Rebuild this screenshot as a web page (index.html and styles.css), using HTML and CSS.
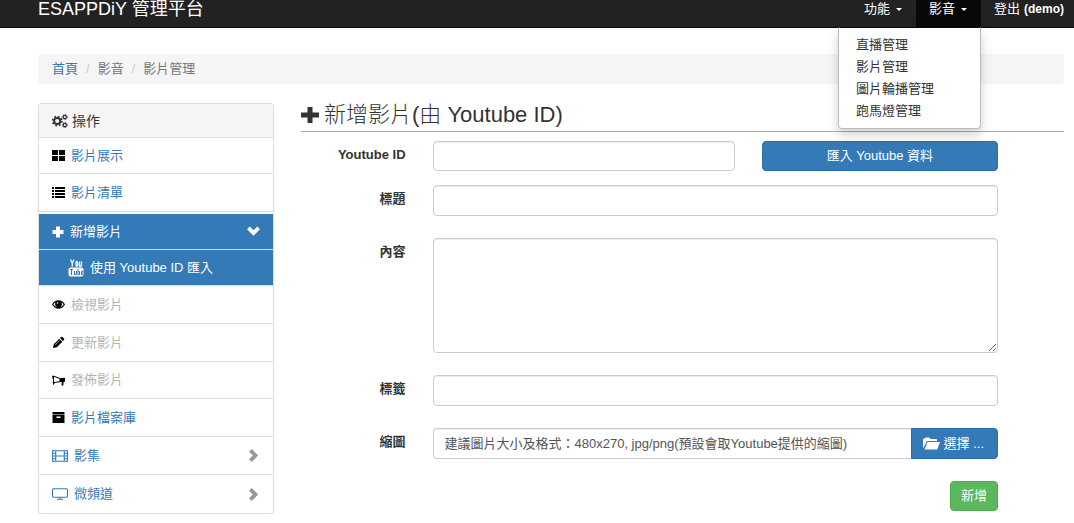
FILE: index.html
```html
<!DOCTYPE html>
<html lang="zh-Hant">
<head>
<meta charset="utf-8">
<meta name="viewport" content="width=device-width, initial-scale=1">
<title>ESAPPDiY 管理平台</title>
<link rel="stylesheet" href="styles.css">
</head>
<body>
<header class="navbar">
  <div class="container navbar-inner">
    <a class="brand" href="#">ESAPPDiY 管理平台</a>
    <ul class="nav">
      <li class="nav-item"><a class="nav-link" href="#">功能<span class="caret"></span></a></li>
      <li class="nav-item">
        <a class="nav-link active" href="#" aria-expanded="true">影音<span class="caret"></span></a>
        <ul class="menu">
          <li><a href="#">直播管理</a></li>
          <li><a href="#">影片管理</a></li>
          <li><a href="#">圖片輪播管理</a></li>
          <li><a href="#">跑馬燈管理</a></li>
        </ul>
      </li>
      <li class="nav-item"><a class="nav-link last" href="#">登出 <span class="strong">(demo)</span></a></li>
    </ul>
  </div>
</header>
<div class="container">
  <ol class="breadcrumb">
    <li><a href="#">首頁</a></li>
    <li>影音</li>
    <li>影片管理</li>
  </ol>
  <div class="layout">
    <nav class="panel" aria-label="操作">
      <h2 class="panel-heading">
        <svg class="icon wide" viewBox="0 0 16 14"><g fill="none" stroke="currentColor"><circle cx="5.2" cy="7" r="3.1" stroke-width="2"/><circle cx="5.2" cy="7" r="4.6" stroke-width="1.6" stroke-dasharray="1.8 1.81"/><circle cx="12.8" cy="3" r="1.6" stroke-width="1.2"/><circle cx="12.8" cy="3" r="2.5" stroke-width="1" stroke-dasharray="1 .963"/><circle cx="12.8" cy="11" r="1.6" stroke-width="1.2"/><circle cx="12.8" cy="11" r="2.5" stroke-width="1" stroke-dasharray="1 .963"/></g></svg>
        操作</h2>
      <ul class="list">
        <li><a class="item short" href="#"><svg class="icon dark" viewBox="0 0 13 13"><path d="M0 1h6v5H0zM7 1h6v5H7zM0 7h6v5H0zM7 7h6v5H7z"/></svg>影片展示</a></li>
        <li><a class="item" href="#"><svg class="icon dark" viewBox="0 0 13 13"><path d="M0 1h2v2H0zM3 1h10v2H3zM0 4h2v2H0zM3 4h10v2H3zM0 7h2v2H0zM3 7h10v2H3zM0 10h2v2H0zM3 10h10v2H3z"/></svg>影片清單</a></li>
        <li class="open"><a class="item short active" href="#"><svg class="icon plus" viewBox="0 0 12 12"><path d="M4 .5h4V4h3.500v4H8v3.500H4V8H.500V4H4z"/></svg>新增影片<svg class="icon arrow" viewBox="0 0 13 13"><path d="M2.800 1.500 6.500 5.200l3.700-3.700L13 4.300 6.500 10.800 0 4.300z"/></svg></a>
          <a class="item short active sub" href="#"><svg class="icon tube" viewBox="0 0 16 18"><path fill="none" stroke="currentColor" stroke-width="1.300" d="m2.500.5 1.800 3.700L6 .5M4.300 4v3.500M8 3v3.500q0 .8.800.8t.800-.8V3.400q0-.9-.8-.9T8 3.400M11.500 2.500v4q0 .9 1 .7l1-.8M13.500 2.500v5"/><rect x=".5" y="8.500" width="15" height="9" rx="2"/><path fill="none" stroke="#337ab7" d="M2 10.500h3M3.500 10.500V16M6.500 12v3.500h2V12M10 10v5.500h1.500V12.500H10M15 14h-1.500v-1.500H15M13.500 14v1.500H15"/></svg>使用 Youtube ID 匯入</a></li>
        <li><a class="item disabled" href="#"><svg class="icon dark" viewBox="0 0 13 13"><path fill-rule="evenodd" d="M0 6.500Q2.500 2.300 6.500 2.300T13 6.500q-2.500 4.200-6.500 4.200T0 6.500zm1.300 0q2 3.100 5.200 3.100t5.200-3.100Q11 5.200 9.300 4.200q.6.900.6 1.900a3.400 3.400 0 0 1-6.800 0q0-1 .6-1.900Q2 5.200 1.300 6.500z"/><circle cx="5.500" cy="5" r=".8" fill="#fff"/></svg>檢視影片</a></li>
        <li><a class="item disabled" href="#"><svg class="icon dark" viewBox="0 0 13 13"><path d="m1 12 .8-3.800L7.300 2.700l3 3L4.800 11.200zM8 2l1-1q.7-.6 1.400 0L12 2.600q.6.700 0 1.400l-1 1z"/><path fill="none" stroke="#fff" stroke-width=".6" d="m3.300 8.800 4.600-4.600"/></svg>更新影片</a></li>
        <li><a class="item mid disabled" href="#"><svg class="icon dark" viewBox="0 0 13 13"><path fill="none" stroke="currentColor" d="M1.500 2v8.500M2 2.300 8 4.500M2 8.500l6-.8"/><path d="M7.500 4.200 13 3.800v3.700l-1.400.5-.3 3.500H9.500l.3-3.500H7.500zM0 2l2-.5V4L.7 5zM.5 8.500 3 8.700l-1.500 2z"/></svg>發佈影片</a></li>
        <li><a class="item" href="#"><svg class="icon dark" viewBox="0 0 13 13"><path fill-rule="evenodd" d="M.5 1h12v2.500H.500zM.5 4h12v8H.500zM4.500 5.500V7h4V5.500z"/></svg>影片檔案庫</a></li>
        <li><a class="item" href="#"><svg class="icon wide line" viewBox="0 0 15 13"><path d="M.5 1.500h14v10H.500zM3.500 1.500v10M11.500 1.500v10M3.500 6.500h8M.5 4h3M.5 6.500h3M.5 9h3M11.500 4h3M11.500 6.500h3M11.500 9h3"/></svg>影集<svg class="icon arrow" viewBox="0 0 13 13"><path d="M4.700 0 11.200 6.500 4.700 13 2 10.300l3.800-3.800L2 2.700z"/></svg></a></li>
        <li><a class="item" href="#"><svg class="icon wide line" viewBox="0 0 15 13"><rect x=".5" y="1.500" width="14" height="8" rx="1"/><path d="M7.500 9.500v2M4.500 11.500h6"/></svg>微頻道<svg class="icon arrow" viewBox="0 0 13 13"><path d="M4.700 0 11.200 6.500 4.700 13 2 10.300l3.800-3.800L2 2.700z"/></svg></a></li>
      </ul>
    </nav>
    <main class="main">
      <h1 class="title"><svg class="title-icon" viewBox="0 0 18 18"><path d="M6.500 1h5v5.500H18v5h-6.500V17h-5v-5.500H0v-5h6.500z"/></svg>新增影片(由 Youtube ID)</h1>
      <form class="form">
        <div class="row">
          <label for="youtube-id">Youtube ID</label>
          <div class="import">
            <input class="control" id="youtube-id" type="text">
            <button class="btn primary" type="button">匯入 Youtube 資料</button>
          </div>
        </div>
        <div class="row tight">
          <label for="title">標題</label>
          <input class="control" id="title" type="text">
        </div>
        <div class="row">
          <label for="content">內容</label>
          <textarea class="control area" id="content"></textarea>
        </div>
        <div class="row">
          <label for="tags">標籤</label>
          <input class="control" id="tags" type="text">
        </div>
        <div class="row">
          <label for="thumb-name">縮圖</label>
          <div class="file">
            <input class="control caption" id="thumb-name" type="text" readonly placeholder="建議圖片大小及格式：480x270, jpg/png(預設會取Youtube提供的縮圖)">
            <label class="btn primary pick"><svg class="folder" viewBox="0 0 17 13"><path d="M0 11.500V2.500Q0 1.500 1 1.500h1L2.500.5h4l.8 1.500H13q1 0 1 1v1H4z"/><path d="M4.500 5H17l-2.800 7.500H1.500z"/></svg>選擇 ...<input class="file-input" id="thumb" type="file"></label>
          </div>
        </div>
        <div class="actions"><button class="btn success" type="submit">新增</button></div>
      </form>
    </main>
  </div>
</div>
</body>
</html>
```
FILE: styles.css
```css
* {
  box-sizing: border-box;
}

body {
  margin: 0;
  background: #fff;
  color: #333;
  font: 13px/18px "Liberation Sans", "Noto Sans CJK TC", sans-serif;
}

a {
  color: #337ab7;
  text-decoration: none;
}

ul,
ol {
  margin: 0;
  padding: 0;
  list-style: none;
}

svg {
  fill: currentColor;
}

.container {
  padding: 0 10px 0 38px;
}

.navbar {
  background: #222;
  border-bottom: 1px solid #080808;
}

.navbar-inner {
  display: flex;
  justify-content: space-between;
}

.brand {
  color: #fff;
  font-size: 18px;
  line-height: 18px;
}

.nav {
  display: flex;
}

.nav-item {
  position: relative;
}

.nav-link {
  display: flex;
  align-items: center;
  gap: 5px;
  height: 27px;
  padding: 0 13px 9px;
  color: #fff;
}

.nav-link.active {
  background: #080808;
}

.nav-link.last {
  gap: 4px;
  padding-right: 0;
}

.strong {
  font-size: 12px;
  font-weight: bold;
}

.caret {
  margin: 1px 1px 0;
  border: 3px solid transparent;
  border-top-color: currentColor;
  border-bottom: 0;
}

.menu {
  position: absolute;
  top: 100%;
  right: 0;
  z-index: 1;
  min-width: 143px;
  padding: 6px 0;
  background: #fff;
  border: 1px solid #bbb;
  border-top-color: #080808;
  border-radius: 0 0 4px 4px;
  box-shadow: 0 6px 12px rgba(0, 0, 0, 0.18);
}

.menu a {
  display: block;
  padding: 0 17px;
  color: #333;
  line-height: 22px;
}

.breadcrumb {
  display: flex;
  margin: 26px 0 19px;
  padding: 6px 14px;
  background: #f5f5f5;
  border-radius: 4px;
  color: #777;
}

.breadcrumb li + li::before {
  padding: 0 8px;
  color: #ccc;
  content: "/";
}

.layout {
  display: flex;
  align-items: flex-start;
  gap: 27px;
}

.panel {
  flex: 0 0 23%;
  overflow: hidden;
  border: 1px solid #ddd;
  border-radius: 4px;
  box-shadow: 0 1px 1px rgba(0, 0, 0, 0.1);
}

.panel-heading {
  display: flex;
  align-items: center;
  gap: 4px;
  height: 34px;
  margin: 0;
  padding: 0 13px;
  background: #f5f5f5;
  border-bottom: 1px solid #ddd;
  font-size: 14px;
  font-weight: normal;
}

.item {
  display: flex;
  align-items: center;
  gap: 6px;
  height: 38px;
  padding: 0 13px;
  border-bottom: 1px solid #ddd;
}

.list li:last-child .item {
  border-bottom: 0;
}

.item.short {
  height: 36px;
}

.item.mid {
  height: 37px;
}

.item.active {
  background: #337ab7;
  color: #fff;
}

.item.sub {
  padding-left: 29px;
}

.item.disabled {
  color: #b4b4b4;
}

.open {
  padding-top: 2px;
}

.icon {
  flex: none;
  width: 13px;
  height: 13px;
}

.icon.dark {
  color: #000;
}

.icon.wide {
  width: 16px;
  height: 14px;
}

.icon.plus {
  width: 12px;
  height: 12px;
}

.icon.tube {
  width: 16px;
  height: 18px;
}

.icon.line {
  fill: none;
  stroke: currentColor;
}

.icon.arrow {
  margin-left: auto;
  color: #999;
}

.active .icon.arrow {
  color: #fff;
}

.main {
  flex: 1;
  min-width: 0;
}

.title {
  display: flex;
  align-items: center;
  gap: 5px;
  margin: 0 0 9px;
  padding-bottom: 4px;
  border-bottom: 1px solid #aaa;
  font-size: 22px;
  font-weight: 300;
  line-height: 24px;
}

.title-icon {
  width: 18px;
  height: 18px;
}

.form {
  display: grid;
  gap: 22px;
  padding-right: 66px;
}

.row {
  display: grid;
  grid-template-columns: 15% 1fr;
  column-gap: 27px;
}

.row.tight {
  margin-top: -8px;
}

.row > label {
  padding-top: 5px;
  font-weight: bold;
  text-align: right;
}

.import {
  display: grid;
  grid-template-columns: 302fr 236fr;
  gap: 27px;
}

.control {
  display: block;
  width: 100%;
  min-width: 0;
  height: 31px;
  margin: 0;
  padding: 5px 11px;
  background: #fff;
  border: 1px solid #ccc;
  border-radius: 4px;
  box-shadow: inset 0 1px 1px rgba(0, 0, 0, 0.075);
  color: #555;
  font: inherit;
}

.control::placeholder {
  color: #555;
  opacity: 1;
}

.import .control {
  height: 30px;
}

.area {
  height: 115px;
}

.btn {
  height: 30px;
  padding: 0 10px;
  border: 1px solid;
  border-radius: 4px;
  color: #fff;
  font: inherit;
}

.primary {
  background: #337ab7;
  border-color: #2e6da4;
}

.success {
  background: #5cb85c;
  border-color: #4cae4c;
}

.file {
  display: flex;
}

.caption {
  flex: 1;
  border-right: 0;
  border-radius: 4px 0 0 4px;
}

.pick {
  position: relative;
  display: flex;
  flex: none;
  align-items: center;
  gap: 4px;
  height: 31px;
  padding: 0 13px 0 11px;
  border-radius: 0 4px 4px 0;
}

.folder {
  width: 17px;
  height: 13px;
}

.file-input {
  position: absolute;
  inset: 0;
  width: 100%;
  opacity: 0;
}

.actions {
  display: flex;
  justify-content: flex-end;
}
```
